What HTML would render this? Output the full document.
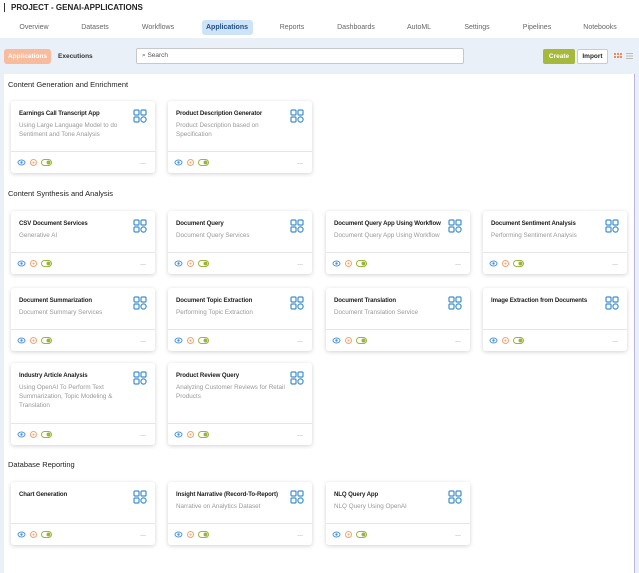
<!DOCTYPE html>
<html><head><meta charset="utf-8"><style>
*{box-sizing:border-box;margin:0;padding:0}
body{width:639px;height:573px;overflow:hidden;background:#fff;font-family:"Liberation Sans",sans-serif;position:relative}
.a{position:absolute}
.nav{font-size:7px;color:#666;top:24px;transform:translateX(-50%);white-space:nowrap}
.band{left:0;top:38px;width:639px;height:535px;background:#eaf0f8}
.panel{left:4px;top:74px;width:631px;height:499px;background:#fff;border-right:1px solid #b9b3e3}
.sec{font-size:7.5px;color:#222;left:8px}
.card{width:144px;background:#fff;border-radius:3px;box-shadow:0 1px 4px rgba(0,0,0,.18)}
.card .t{position:absolute;left:8px;top:9px;font-size:6.1px;font-weight:bold;color:#222;width:125px;white-space:nowrap;letter-spacing:-.1px}
.card .d{position:absolute;left:8px;top:20px;font-size:6.3px;color:#999;width:112px;line-height:9px}
.card .ic{position:absolute;right:8px;top:8px}
.card .f{position:absolute;left:0;right:0;bottom:0;height:22px;border-top:1px solid #e6e6e6}
.card .f svg{position:absolute;left:6px;top:6px}
.card .f .m{position:absolute;right:9px;top:7px;font-size:7px;color:#888}
</style></head><body>
<div class="a" style="left:4px;top:3px;width:1px;height:9px;background:#333"></div>
<div class="a" style="left:11px;top:3px;font-size:8px;font-weight:bold;color:#222">PROJECT - GENAI-APPLICATIONS</div>
<div class="a" style="left:202px;top:20px;width:51px;height:15px;background:#cde3f7;border-radius:3px"></div>
<div class="a nav" style="left:34px">Overview</div>
<div class="a nav" style="left:95px">Datasets</div>
<div class="a nav" style="left:158px">Workflows</div>
<div class="a nav" style="left:227px;color:#1f4e8c;font-weight:bold">Applications</div>
<div class="a nav" style="left:292px">Reports</div>
<div class="a nav" style="left:356px">Dashboards</div>
<div class="a nav" style="left:419px">AutoML</div>
<div class="a nav" style="left:477px">Settings</div>
<div class="a nav" style="left:537px">Pipelines</div>
<div class="a nav" style="left:600px">Notebooks</div>
<div class="a band"></div>
<div class="a" style="left:4px;top:49px;width:47px;height:15px;background:#f8bb9c;border-radius:3px;color:#fff;font-size:6.5px;font-weight:bold;text-align:center;line-height:15px">Applications</div>
<div class="a" style="left:58px;top:53px;font-size:6.5px;font-weight:bold;color:#333">Executions</div>
<div class="a" style="left:136px;top:48px;width:328px;height:16px;background:#fff;border:1px solid #c8c8c8;border-radius:2px;font-size:6.5px;color:#555;padding-left:5px;line-height:14px">&#x2315; Search</div>
<div class="a" style="left:543px;top:49px;width:32px;height:15px;background:#a5b93d;border-radius:2px;color:#fff;font-size:6.5px;font-weight:bold;text-align:center;line-height:15px">Create</div>
<div class="a" style="left:577px;top:49px;width:31px;height:15px;background:#fff;border:1px solid #ccc;border-radius:2px;color:#222;font-size:6.5px;font-weight:bold;text-align:center;line-height:13px">Import</div>
<svg class="a" style="left:614px;top:53px" width="20" height="7"><g fill="#f08a5d"><rect x="0" y="0" width="2" height="2"/><rect x="3" y="0" width="2" height="2"/><rect x="6" y="0" width="2" height="2"/><rect x="0" y="3" width="2" height="2"/><rect x="3" y="3" width="2" height="2"/><rect x="6" y="3" width="2" height="2"/></g><g fill="#bbb"><rect x="12" y="0" width="7" height="1"/><rect x="12" y="2.5" width="7" height="1"/><rect x="12" y="5" width="7" height="1"/></g></svg>
<div class="a panel"></div>
<div class="a sec" style="top:80px">Content Generation and Enrichment</div>
<div class="a sec" style="top:189px">Content Synthesis and Analysis</div>
<div class="a sec" style="top:460px">Database Reporting</div>
<svg width="0" height="0" style="position:absolute"><defs>
<g id="gi"><g fill="none" stroke="#3d8fd0" stroke-width="1.2"><rect x="1" y="1" width="5" height="5" rx="1"/><rect x="8" y="1" width="5" height="5" rx="1"/><rect x="1" y="8" width="5" height="5" rx="1"/><circle cx="10.5" cy="10.5" r="2.6"/></g></g>
<g id="fi"><g fill="none" stroke-width="1"><ellipse cx="4.5" cy="4.5" rx="3.5" ry="2.5" stroke="#4a90e2"/><circle cx="4.5" cy="4.5" r="1.2" fill="#4a90e2" stroke="none"/><circle cx="16.5" cy="4.5" r="3" stroke="#f5a26f"/><circle cx="16.5" cy="4.5" r="1" fill="#f5a26f" stroke="none"/><rect x="24.5" y="1.5" width="10" height="6" rx="3" stroke="#9bb53a"/><circle cx="31.5" cy="4.5" r="2" fill="#9bb53a" stroke="none"/></g></g>
</defs></svg>

<div id="cards"></div>
<script>
var cols=[11,168,326,483];
var rows=[
[101,50,[["Earnings Call Transcript App","Using Large Language Model to do Sentiment and Tone Analysis"],["Product Description Generator","Product Description based on Specification"]]],
[211,41,[["CSV Document Services","Generative AI"],["Document Query","Document Query Services"],["Document Query App Using Workflow","Document Query App Using Workflow"],["Document Sentiment Analysis","Performing Sentiment Analysis"]]],
[288,41,[["Document Summarization","Document Summary Services"],["Document Topic Extraction","Performing Topic Extraction"],["Document Translation","Document Translation Service"],["Image Extraction from Documents",""]]],
[363,60,[["Industry Article Analysis","Using OpenAI To Perform Text Summarization, Topic Modeling &amp; Translation"],["Product Review Query","Analyzing Customer Reviews for Retail Products"]]],
[482,41,[["Chart Generation",""],["Insight Narrative (Record-To-Report)","Narrative on Analytics Dataset"],["NLQ Query App","NLQ Query Using OpenAI"]]]];
var h="";
rows.forEach(function(r){r[2].forEach(function(c,i){
h+='<div class="a card" style="left:'+cols[i]+'px;top:'+r[0]+'px;height:'+(r[1]+22)+'px"><div class="t">'+c[0]+'</div><div class="d">'+c[1]+'</div><svg class="ic" width="14" height="14"><use href="#gi"/></svg><div class="f"><svg width="36" height="9"><use href="#fi"/></svg><span class="m">...</span></div></div>';
});});
document.getElementById("cards").innerHTML=h;
</script>
</body></html>
